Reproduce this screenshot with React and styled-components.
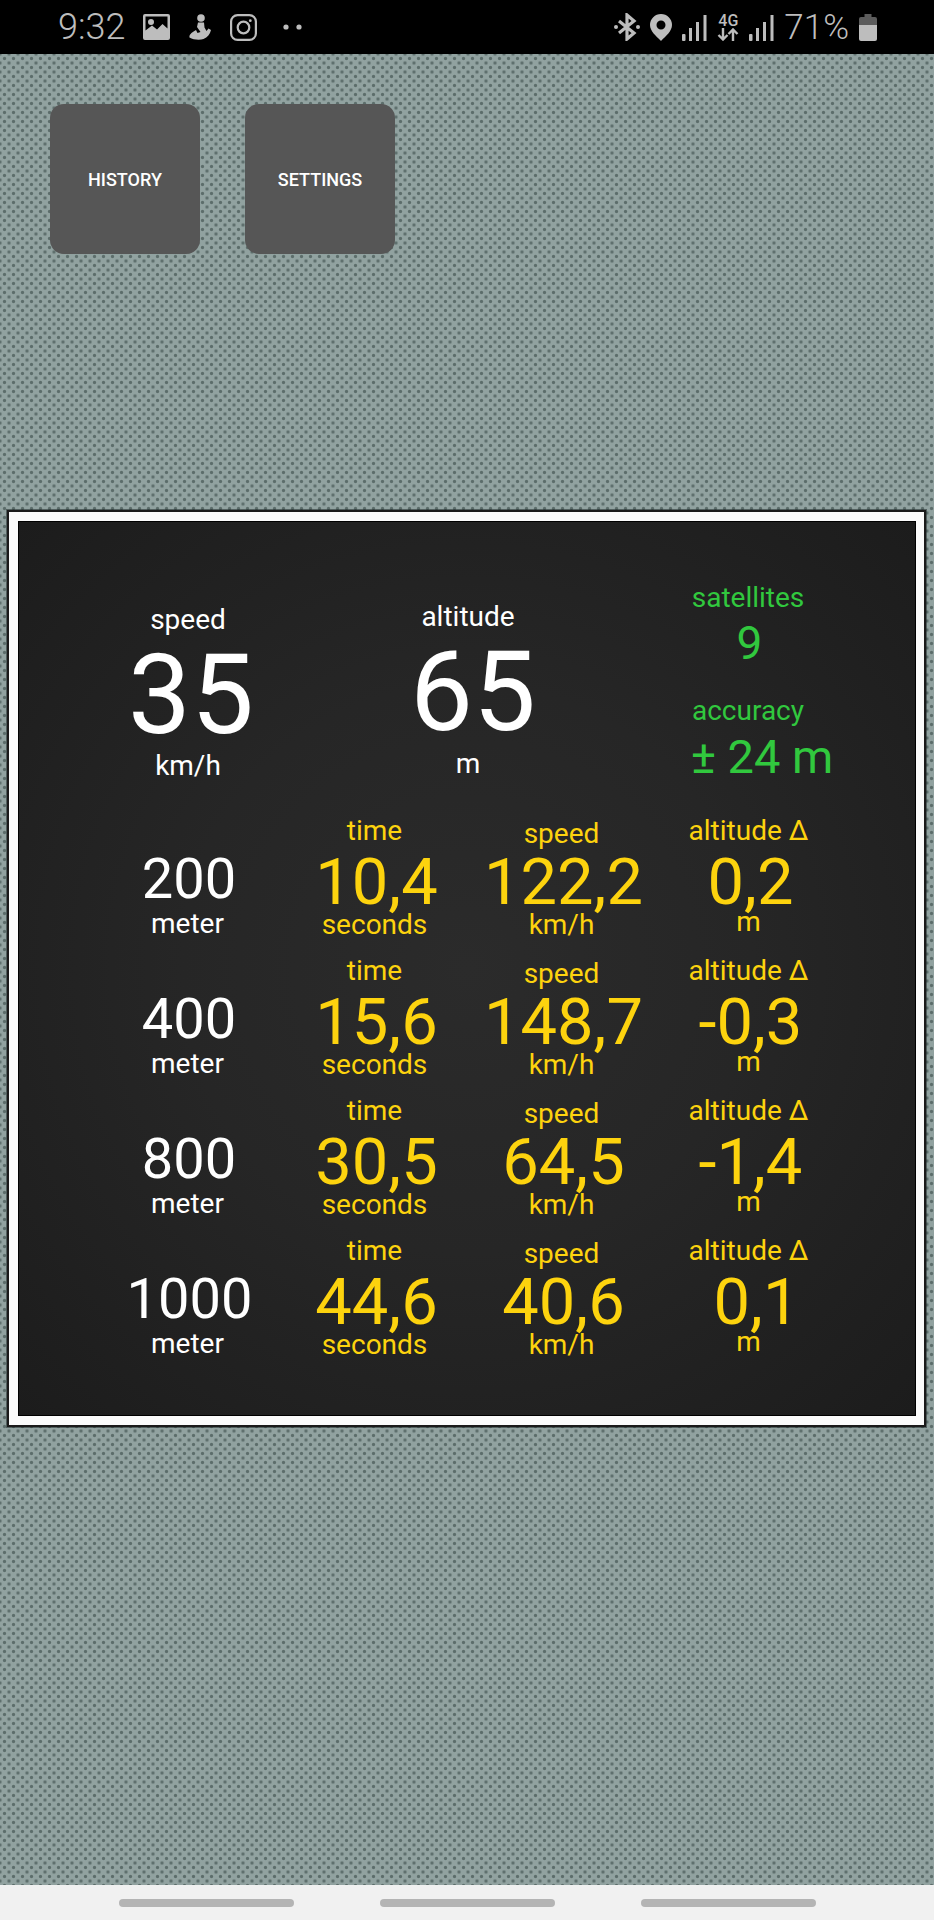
import React from "react";
import styled, { createGlobalStyle } from "styled-components";

const GlobalStyle = createGlobalStyle`
  html, body { margin: 0; padding: 0; background: #8c9c99; }
  * { box-sizing: border-box; }
`;

const Screen = styled.div`
  width: 934px;
  height: 1920px;
  display: flex;
  flex-direction: column;
  overflow: hidden;
  font-family: Roboto, "Liberation Sans", sans-serif;
`;

const StatusBar = styled.div`
  height: 54px;
  flex: none;
  background: #000;
  color: #bdbdbd;
  display: flex;
  align-items: center;
  justify-content: space-between;
  padding: 0 57px 0 58px;
`;

const StatusGroup = styled.div`
  display: flex;
  align-items: center;
  gap: ${(p) => p.$gap || 0}px;
`;

const StatusText = styled.span`
  font-size: ${(p) => p.$size || 36}px;
  font-weight: 300;
  line-height: 1;
`;

const Dots = styled.span`
  display: flex;
  margin-left: 8px;
`;

const NetStack = styled.div`
  width: 22px;
  display: flex;
  flex-direction: column;
  align-items: center;
`;

const NetLabel = styled.span`
  font-size: 16px;
  font-weight: 500;
  line-height: 15px;
`;

const Main = styled.main`
  flex: 1;
  padding: 50px 8px 0 7px;
  background-color: #91a2a0;
  background-image:
    radial-gradient(circle at center, #5c6d6b 0, #5c6d6b 1.2px, transparent 2.1px),
    radial-gradient(circle at center, #5c6d6b 0, #5c6d6b 1.2px, transparent 2.1px);
  background-size: 9px 9px;
  background-position: 0 0, 4.5px 4.5px;
`;

const ButtonRow = styled.div`
  display: flex;
  gap: 45px;
  padding-left: 43px;
  margin-bottom: 256px;
`;

const SquareButton = styled.button`
  width: 150px;
  height: 150px;
  border: none;
  border-radius: 14px;
  background: #565656;
  color: #fff;
  font-family: inherit;
  font-size: 18px;
  font-weight: 500;
  padding: 0;
`;

const Panel = styled.section`
  height: 917px;
  background: #fbfbfb;
  border: 2px solid #1a1a1a;
  outline: 1px solid rgba(20, 30, 30, 0.5);
  padding: 9px 8px 9px 9px;
`;

const PanelInner = styled.div`
  height: 100%;
  border: 1px solid #000;
  background: radial-gradient(ellipse at center, #2b2b2b 0%, #262626 45%, #1c1c1c 100%);
  padding-top: 59px;
`;

const TopGrid = styled.div`
  display: grid;
  grid-template-columns: repeat(3, 280px);
  padding-left: 29px;
  height: 233px;
`;

const Stack = styled.div`
  display: flex;
  flex-direction: column;
  align-items: center;
  color: ${(p) => p.$color || "#fff"};
  padding-top: ${(p) => p.$top || 0}px;
`;

const Label = styled.div`
  font-size: 28px;
  line-height: 34px;
  margin-top: ${(p) => p.$mt || 0}px;
  white-space: nowrap;
`;

const Big = styled.div`
  font-size: 112px;
  line-height: 106px;
  margin-top: 5px;
  margin-left: ${(p) => p.$ml || 0}px;
`;

const Value = styled.div`
  font-size: ${(p) => p.$size || 65}px;
  line-height: ${(p) => p.$height || 60}px;
  margin-top: ${(p) => p.$mt || 0}px;
  margin-left: ${(p) => p.$ml || 0}px;
  white-space: nowrap;
`;

const Rows = styled.div`
  display: flex;
  flex-direction: column;
  gap: 14px;
`;

const Row = styled.div`
  display: grid;
  grid-template-columns: repeat(4, 187px);
  padding-left: 75px;
  height: 126px;
`;

const Nav = styled.nav`
  height: 35px;
  flex: none;
  background: #f1f1f1;
  display: grid;
  grid-template-columns: repeat(3, 261px);
  justify-content: center;
  justify-items: center;
  padding-top: 14px;
`;

const Pill = styled.div`
  width: 175px;
  height: 8px;
  border-radius: 4px;
  background: #b4b4b4;
`;

const GOLD = "#fdd30e";
const GREEN = "#31c83e";

const rows = [
  { meters: "200", time: "10,4", speed: "122,2", alt: "0,2", altShift: 4 },
  { meters: "400", time: "15,6", speed: "148,7", alt: "-0,3", altShift: 4 },
  { meters: "800", time: "30,5", speed: "64,5", alt: "-1,4", altShift: 4 },
  { meters: "1000", time: "44,6", speed: "40,6", alt: "0,1", altShift: 16 },
];

const ImageIcon = () => (
  <svg width="27" height="26" viewBox="0 0 27 26">
    <path fill="currentColor" fillRule="evenodd" d="M2 0h23a2 2 0 0 1 2 2v22a2 2 0 0 1-2 2H2a2 2 0 0 1-2-2V2a2 2 0 0 1 2-2zM2.500 2.500v14l6.500-5 5 4 5.500-5.500 5 4.500V2.500zM8 5a3 3 0 1 1 0 6 3 3 0 0 1 0-6z" />
  </svg>
);

const FigureIcon = () => (
  <svg width="24" height="26" viewBox="0 0 24 26">
    <circle cx="13" cy="4" r="3.800" fill="currentColor" />
    <path fill="currentColor" d="M10 8.500h6l.5 5 2 3.500 2-2.500 2.500 1.500c-1 4-3.500 7.500-7.500 9-3.500 1.200-10 1-14-1.500-.8-3 3-5.500 6.500-7.500l1.500 3 3-1-3.500-5z" />
  </svg>
);

const InstagramIcon = () => (
  <svg width="27" height="27" viewBox="0 0 27 27" fill="none" stroke="currentColor" strokeWidth="2.200">
    <rect x="1.100" y="1.100" width="24.800" height="24.800" rx="6.500" />
    <circle cx="13.500" cy="13.500" r="5.800" />
    <circle cx="20.300" cy="6.700" r="1.400" fill="currentColor" stroke="none" />
  </svg>
);

const DotsIcon = () => (
  <svg width="20" height="6" viewBox="0 0 20 6">
    <circle cx="3" cy="3" r="2.600" fill="currentColor" />
    <circle cx="16" cy="3" r="2.600" fill="currentColor" />
  </svg>
);

const BluetoothIcon = () => (
  <svg width="26" height="28" viewBox="0 0 26 28">
    <path fill="none" stroke="currentColor" strokeWidth="3.200" d="M5 8l15 12-7 6V2l7 6L5 20" />
    <circle cx="2" cy="14" r="2" fill="currentColor" />
    <circle cx="24" cy="14" r="2" fill="currentColor" />
  </svg>
);

const PinIcon = () => (
  <svg width="22" height="27" viewBox="0 0 22 27">
    <path fill="currentColor" fillRule="evenodd" d="M11 0a11 11 0 0 1 11 11c0 6-6 11-11 16C6 22 0 17 0 11A11 11 0 0 1 11 0zm0 6.500a4.500 4.500 0 1 0 0 9 4.500 4.500 0 0 0 0-9z" />
  </svg>
);

const SignalIcon = () => (
  <svg width="25" height="27" viewBox="0 0 25 27" fill="currentColor">
    <rect x="0" y="20" width="3.500" height="7" rx="1" />
    <rect x="7" y="14" width="3" height="13" />
    <rect x="14" y="8" width="3" height="19" />
    <rect x="21.500" y="1" width="3" height="26" />
  </svg>
);

const ArrowsIcon = () => (
  <svg width="22" height="13" viewBox="0 0 22 13" fill="none" stroke="currentColor" strokeWidth="2.400">
    <path d="M6 0v11M1.500 7L6 11.500 10.500 7" />
    <path d="M16 13V2M11.500 6L16 1.500 20.500 6" />
  </svg>
);

const BatteryIcon = () => (
  <svg width="18" height="27" viewBox="0 0 18 27">
    <path fill="#5c5c5c" d="M5.500 0h7v3h3.500a2 2 0 0 1 2 2v6H0V5a2 2 0 0 1 2-2h3.500z" />
    <path fill="currentColor" d="M0 11h18v14a2 2 0 0 1-2 2H2a2 2 0 0 1-2-2z" />
  </svg>
);

const App = () => (
  <Screen>
    <GlobalStyle />
    <StatusBar>
      <StatusGroup $gap={18}>
        <StatusText>9:32</StatusText>
        <ImageIcon />
        <FigureIcon />
        <InstagramIcon />
        <Dots>
          <DotsIcon />
        </Dots>
      </StatusGroup>
      <StatusGroup $gap={10}>
        <BluetoothIcon />
        <PinIcon />
        <SignalIcon />
        <NetStack>
          <NetLabel>4G</NetLabel>
          <ArrowsIcon />
        </NetStack>
        <SignalIcon />
        <StatusText $size={35}>71%</StatusText>
        <BatteryIcon />
      </StatusGroup>
    </StatusBar>

    <Main>
      <ButtonRow>
        <SquareButton>HISTORY</SquareButton>
        <SquareButton>SETTINGS</SquareButton>
      </ButtonRow>

      <Panel>
        <PanelInner>
          <TopGrid>
            <Stack $top={22}>
              <Label>speed</Label>
              <Big $ml={6}>35</Big>
              <Label $mt={1}>km/h</Label>
            </Stack>
            <Stack $top={19}>
              <Label>altitude</Label>
              <Big $ml={10}>65</Big>
              <Label $mt={2}>m</Label>
            </Stack>
            <Stack $color={GREEN}>
              <Label>satellites</Label>
              <Value $size={46} $height={56} $ml={3}>9</Value>
              <Label $mt={23}>accuracy</Label>
              <Value $size={47} $height={58} $ml={28}>± 24 m</Value>
            </Stack>
          </TopGrid>
          <Rows>
            {rows.map((r) => (
              <Row key={r.meters}>
                <Stack $top={35}>
                  <Value $size={56} $height={60} $ml={r.meters.length > 3 ? 4 : 3}>{r.meters}</Value>
                  <Label $mt={-2}>meter</Label>
                </Stack>
                <Stack $color={GOLD}>
                  <Label>time</Label>
                  <Value $mt={4} $ml={4}>{r.time}</Value>
                  <Label $mt={-4}>seconds</Label>
                </Stack>
                <Stack $color={GOLD} $top={3}>
                  <Label>speed</Label>
                  <Value $mt={1} $ml={4}>{r.speed}</Value>
                  <Label $mt={-4}>km/h</Label>
                </Stack>
                <Stack $color={GOLD}>
                  <Label>altitude Δ</Label>
                  <Value $mt={4} $ml={r.altShift}>{r.alt}</Value>
                  <Label $mt={-7}>m</Label>
                </Stack>
              </Row>
            ))}
          </Rows>
        </PanelInner>
      </Panel>
    </Main>

    <Nav>
      <Pill />
      <Pill />
      <Pill />
    </Nav>
  </Screen>
);

export default App;
